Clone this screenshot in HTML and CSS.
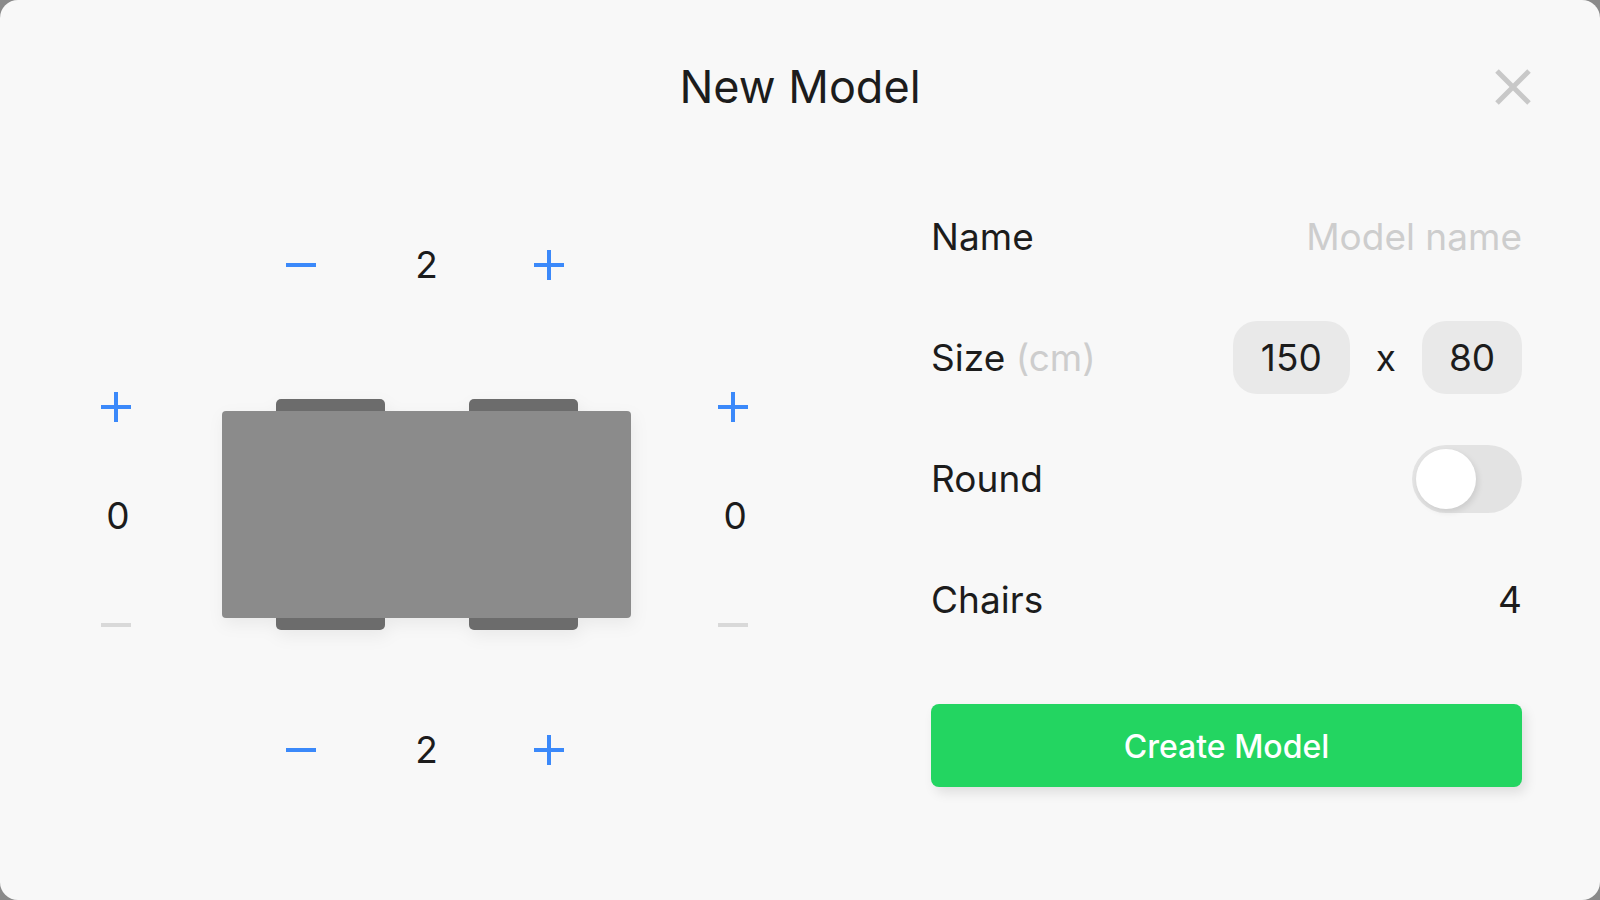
FILE: index.html
```
<!DOCTYPE html>
<html lang="en">
<head>
    <meta charset="UTF-8">
    <meta name="viewport" content="width=device-width, initial-scale=1.0">
    <title>New Model</title>
    <link rel="stylesheet" href="styles.css">
</head>
<body>
    <main class="modal">
        <header class="modal-header">
            <h1>New Model</h1>
            <button type="button" class="close-btn" aria-label="Close">
                <svg viewBox="0 0 36 36"><path d="M2 2L34 34M34 2L2 34"/></svg>
            </button>
        </header>

        <form class="modal-body">
            <!-- Table preview with chair counters on each side -->
            <section class="editor">
                <div class="stepper stepper-top">
                    <button type="button" class="step-btn" aria-label="Remove top chair">
                        <svg viewBox="0 0 30 30"><path d="M0 15H30"/></svg>
                    </button>
                    <output class="count">2</output>
                    <button type="button" class="step-btn" aria-label="Add top chair">
                        <svg viewBox="0 0 30 30"><path d="M0 15H30M15 0V30"/></svg>
                    </button>
                </div>

                <div class="stepper stepper-side">
                    <button type="button" class="step-btn" aria-label="Add left chair">
                        <svg viewBox="0 0 30 30"><path d="M0 15H30M15 0V30"/></svg>
                    </button>
                    <output class="count">0</output>
                    <button type="button" class="step-btn" aria-label="Remove left chair" disabled>
                        <svg viewBox="0 0 30 30"><path d="M0 15H30"/></svg>
                    </button>
                </div>

                <div class="preview">
                    <div class="chairs chairs-top">
                        <span class="chair"></span>
                        <span class="chair"></span>
                    </div>
                    <div class="table-top"></div>
                    <div class="chairs chairs-bottom">
                        <span class="chair"></span>
                        <span class="chair"></span>
                    </div>
                </div>

                <div class="stepper stepper-side">
                    <button type="button" class="step-btn" aria-label="Add right chair">
                        <svg viewBox="0 0 30 30"><path d="M0 15H30M15 0V30"/></svg>
                    </button>
                    <output class="count">0</output>
                    <button type="button" class="step-btn" aria-label="Remove right chair" disabled>
                        <svg viewBox="0 0 30 30"><path d="M0 15H30"/></svg>
                    </button>
                </div>

                <div class="stepper stepper-bottom">
                    <button type="button" class="step-btn" aria-label="Remove bottom chair">
                        <svg viewBox="0 0 30 30"><path d="M0 15H30"/></svg>
                    </button>
                    <output class="count">2</output>
                    <button type="button" class="step-btn" aria-label="Add bottom chair">
                        <svg viewBox="0 0 30 30"><path d="M0 15H30M15 0V30"/></svg>
                    </button>
                </div>
            </section>

            <!-- Model settings -->
            <section class="settings">
                <div class="row">
                    <label for="name">Name</label>
                    <input type="text" id="name" class="name-input" placeholder="Model name">
                </div>
                <div class="row">
                    <label for="width">Size <span class="unit">(cm)</span></label>
                    <div class="size-fields">
                        <input type="text" inputmode="numeric" id="width" class="size-input size-width" value="150">
                        <span>x</span>
                        <input type="text" inputmode="numeric" class="size-input size-depth" value="80" aria-label="Depth">
                    </div>
                </div>
                <div class="row">
                    <label for="round">Round</label>
                    <input type="checkbox" id="round" class="toggle" role="switch">
                </div>
                <div class="row">
                    <span>Chairs</span>
                    <span>4</span>
                </div>
                <button type="submit" class="create-btn">Create Model</button>
            </section>
        </form>
    </main>
</body>
</html>
```
FILE: styles.css
```
* {
    margin: 0;
    padding: 0;
    box-sizing: border-box;
}

body {
    font-family: Inter, "Liberation Sans", sans-serif;
    font-size: 37px;
    line-height: 46px;
    color: #1c1c1c;
    background: #8a8a8a;
}

button, input {
    font: inherit;
    color: inherit;
    border: none;
    background: none;
}

button {
    cursor: pointer;
}

svg {
    display: block;
    width: 100%;
    fill: none;
    stroke: currentColor;
}

.modal {
    min-height: 100vh;
    padding-bottom: 80px;
    background: #f8f8f8;
    border-radius: 18px;
}

.modal-header {
    display: grid;
    grid-template-columns: 1fr auto 1fr;
    align-items: center;
    padding: 52px 69px 78px;
}

.modal-header h1 {
    grid-column: 2;
    font-size: 45px;
    line-height: 70px;
    font-weight: 400;
}

.close-btn {
    justify-self: end;
    width: 36px;
    color: #c8c8c8;
}

.close-btn svg {
    stroke-width: 5;
}

.modal-body {
    display: grid;
    grid-template-columns: minmax(0, 1.095fr) minmax(0, 1fr);
    gap: 183px;
    padding: 0 78px 0 101px;
}

/* Editor */
.editor {
    display: grid;
    grid-template-columns: 30px 1fr 30px;
    gap: 87px;
    align-content: start;
    padding-top: 42px;
}

.stepper {
    display: flex;
    align-items: center;
    justify-content: space-between;
}

.stepper-top,
.stepper-bottom {
    grid-column: 1 / -1;
    justify-self: center;
    width: 278px;
}

.stepper-top {
    margin-bottom: 17px;
}

.stepper-side {
    flex-direction: column;
    height: 248px;
}

.count {
    padding-left: 4px;
}

.step-btn {
    width: 30px;
    height: 30px;
    color: #3b89fa;
}

.step-btn svg {
    stroke-width: 4;
}

.step-btn:disabled {
    color: #d9d9d9;
    cursor: default;
}

.preview {
    align-self: center;
    padding: 0 0 4px 4px;
    filter: drop-shadow(2px 6px 8px rgba(0, 0, 0, 0.06));
}

.table-top {
    height: 207px;
    background: #8b8b8b;
    border-radius: 4px;
}

.chairs {
    display: flex;
    justify-content: center;
    gap: 84px;
}

.chair {
    width: 109px;
    height: 12px;
    background: #6c6c6c;
}

.chairs-top .chair {
    border-radius: 5px 5px 0 0;
}

.chairs-bottom .chair {
    border-radius: 0 0 5px 5px;
}

/* Settings */
.settings {
    display: flex;
    flex-direction: column;
    gap: 48px;
}

.row {
    display: flex;
    align-items: center;
    justify-content: space-between;
    height: 73px;
}

.name-input {
    flex: 1;
    min-width: 0;
    text-align: right;
}

.name-input::placeholder {
    color: #cdcdcd;
}

.unit {
    color: #cdcdcd;
}

.size-fields {
    display: flex;
    align-items: center;
    gap: 26px;
}

.size-input {
    height: 73px;
    text-align: center;
    background: #e9e9e9;
    border-radius: 24px;
}

.size-width {
    width: 117px;
}

.size-depth {
    width: 100px;
}

.toggle {
    appearance: none;
    width: 110px;
    height: 68px;
    padding: 4px;
    background: #e3e3e3;
    border-radius: 34px;
    cursor: pointer;
}

.toggle::before {
    content: "";
    display: block;
    width: 60px;
    height: 60px;
    background: #fff;
    border-radius: 50%;
    box-shadow: 2px 3px 6px rgba(0, 0, 0, 0.1);
}

.toggle:checked {
    background: #23d561;
}

.toggle:checked::before {
    margin-left: auto;
}

.create-btn {
    height: 83px;
    margin-top: 20px;
    padding-top: 2px;
    font-size: 32px;
    font-weight: 500;
    color: #fff;
    background: #23d561;
    border-radius: 8px;
    box-shadow: 4px 6px 12px rgba(0, 0, 0, 0.1);
}
```
